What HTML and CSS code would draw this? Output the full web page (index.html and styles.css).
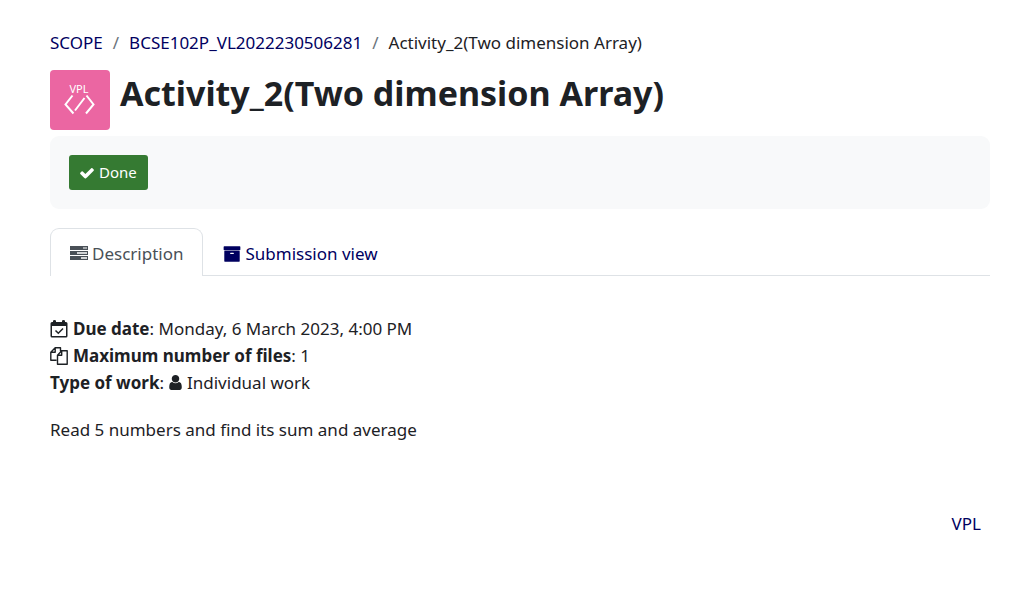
FILE: index.html
```html
<!DOCTYPE html>
<html lang="en">
<head>
<meta charset="utf-8">
<title>Activity_2(Two dimension Array)</title>
<link rel="stylesheet" href="styles.css">
</head>
<body>
<div class="page">
  <nav aria-label="Breadcrumb">
    <ol class="breadcrumb">
      <li><a href="#">SCOPE</a></li>
      <li><a href="#">BCSE102P_VL2022230506281</a></li>
      <li>Activity_2(Two dimension Array)</li>
    </ol>
  </nav>
  <header class="title-row">
    <div class="module-icon">
      <svg viewBox="0 0 60 60" aria-hidden="true">
        <text class="module-text" x="29" y="23" text-anchor="middle">VPL</text>
        <path d="M22.500 25.500L15.500 34.500L23.500 43.500M36.500 25.500L43.500 34.500L36 43.500M34.500 28L25 40.500" fill="none" stroke="#fff" stroke-width="2"/>
      </svg>
    </div>
    <h1>Activity_2(Two dimension Array)</h1>
  </header>
  <main>
    <section class="activity-header">
      <button class="done" type="button">
        <svg class="icon-check" viewBox="0 0 1792 1792" aria-hidden="true"><path d="M1671 566q0 40-28 68l-724 724-136 136q-28 28-68 28t-68-28l-136-136-362-362q-28-28-28-68t28-68l136-136q28-28 68-28t68 28l294 295 656-657q28-28 68-28t68 28l136 136q28 28 28 68z"/></svg>
        Done
      </button>
    </section>
    <nav class="tabs" aria-label="Activity">
      <a class="tab active" href="#">
        <svg class="icon" viewBox="0 0 18 18" aria-hidden="true"><path fill-rule="evenodd" d="M0 1h18v4H0zM13 2.500v1h4v-1zM0 6h18v4H0zM7 7.300v1.400h10V7.300zM0 11h18v4H0zM11 12.300v1.400h6v-1.400z"/></svg>
        Description
      </a>
      <a class="tab" href="#">
        <svg class="icon" viewBox="0 0 1792 1792" aria-hidden="true"><path d="M1088 832q0-26-19-45t-45-19h-256q-26 0-45 19t-19 45 19 45 45 19h256q26 0 45-19t19-45zm576-192v960q0 26-19 45t-45 19h-1408q-26 0-45-19t-19-45v-960q0-26 19-45t45-19h1408q26 0 45 19t19 45zm64-448v256q0 26-19 45t-45 19h-1536q-26 0-45-19t-19-45v-256q0-26 19-45t45-19h1536q26 0 45 19t19 45z"/></svg>
        Submission view
      </a>
    </nav>
    <section class="details">
      <div class="detail">
        <svg class="icon" viewBox="0 0 18 18" aria-hidden="true"><path fill-rule="evenodd" d="M1 2H3V1Q3 0 4.500 0T6 1V2H12V1Q12 0 13.500 0T15 1V2H16Q17.500 2 17.500 3.500V16Q17.500 17.500 16 17.500H2Q.5 17.500.5 16V3.500Q.5 2 2 2zM2 6V16H16V6z"/><path d="M5.500 10.500L8.300 13.300L13 8.500" fill="none" stroke="currentColor" stroke-width="1.500"/></svg>
        <span><b>Due date</b>: Monday, 6 March 2023, 4:00 PM</span>
      </div>
      <div class="detail">
        <svg class="icon" viewBox="0 0 18 18" aria-hidden="true"><path d="M6.500 13.300H.8V5.200L5.200.8H10.500V4.200M5.200.8V5.200H.8M11.700 3.800H17.200V17.200H7.500V8.200L11.700 3.800V8.200H7.500" fill="none" stroke="currentColor" stroke-width="1.400" stroke-linejoin="round"/></svg>
        <span><b>Maximum number of files</b>: 1</span>
      </div>
      <div class="detail">
        <span><b>Type of work</b>:</span>
        <svg class="icon-user" viewBox="256 128 1280 1536" aria-hidden="true"><path d="M1536 1399q0 109-62.500 187t-150.500 78h-854q-88 0-150.500-78t-62.500-187q0-85 8.500-160.500t31.500-152 58.500-131 94-89 134.500-34.500q131 128 313 128t313-128q76 0 134.500 34.500t94 89 58.500 131 31.500 152 8.500 160.500zm-256-887q0 159-112.500 271.500t-271.500 112.500-271.500-112.500-112.500-271.500 112.500-271.500 271.500-112.500 271.500 112.500 112.500 271.500z"/></svg>
        <span>Individual work</span>
      </div>
    </section>
    <p class="intro">Read 5 numbers and find its sum and average</p>
  </main>
  <footer><a href="#">VPL</a></footer>
</div>
</body>
</html>
```
FILE: styles.css
```css
* { box-sizing: border-box; }
body {
  margin: 0;
  background: #fff;
  color: #1d2125;
  font-family: "Noto Sans", "Open Sans", sans-serif;
  font-size: 17px;
  line-height: 27px;
}
a { color: #00005f; text-decoration: none; }
svg { display: block; flex: none; fill: currentColor; }
.page { padding: 29px 43px 0 50px; }
.breadcrumb { display: flex; margin: 0; padding: 0; list-style: none; }
.breadcrumb li + li::before { content: "/"; padding: 0 10px; color: #6a737b; }
.title-row { display: flex; gap: 10px; margin-top: 14px; }
.module-icon {
  flex: none;
  width: 60px;
  height: 60px;
  border-radius: 4px;
  background: #eb66a2;
}
.module-text { fill: #fff; font-size: 11px; }
h1 { margin: 0; font-size: 34px; line-height: 46px; font-weight: 700; }
.activity-header {
  display: flex;
  margin-top: 6px;
  padding: 19px;
  border-radius: 9px;
  background: #f8f9fa;
}
.done {
  display: flex;
  align-items: center;
  gap: 4px;
  height: 35px;
  padding: 0 11px 0 10px;
  border: 0;
  border-radius: 3px;
  background: #357a32;
  color: #fff;
  font: inherit;
  font-size: 15px;
}
.icon-check { width: 16px; height: 16px; }
.tabs { display: flex; margin-top: 19px; border-bottom: 1px solid #dee2e6; }
.tab {
  display: flex;
  align-items: center;
  gap: 4px;
  margin-bottom: -1px;
  padding: 11px 19px 9px;
  border: 1px solid transparent;
  border-bottom: 0;
  border-radius: 9px 9px 0 0;
}
.tab.active { border-color: #dee2e6; background: #fff; color: #495057; }
.icon { width: 18px; height: 18px; }
.details { margin-top: 39px; }
.detail { display: flex; align-items: center; gap: 5px; }
.icon-user { width: 13px; height: 15px; }
.intro { margin: 20px 0 0; }
footer { margin-top: 67px; padding-right: 9px; text-align: right; }
```
